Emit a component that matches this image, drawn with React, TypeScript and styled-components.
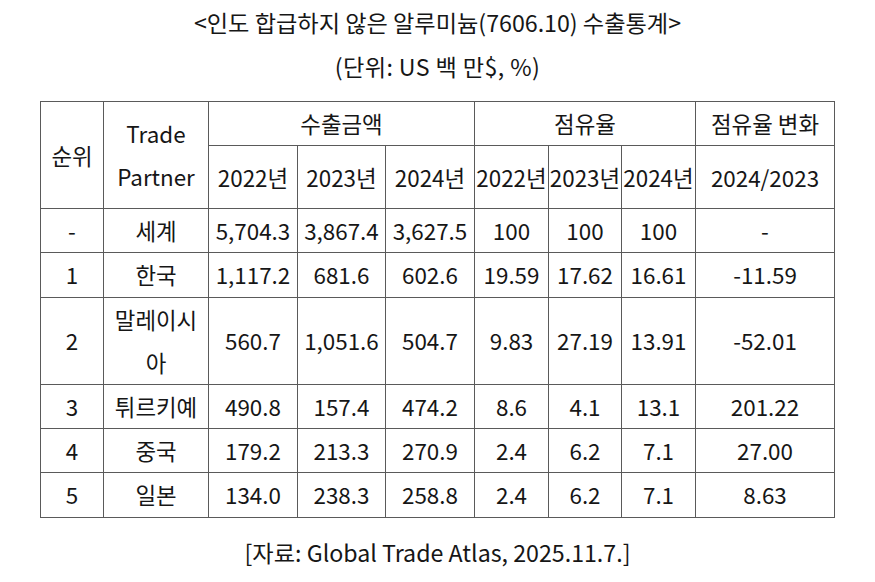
import React from "react";
import styled, { createGlobalStyle } from "styled-components";

const Global = createGlobalStyle`
  html, body { margin: 0; padding: 0; background: #fff; }
  body { font-family: "Noto Sans CJK KR", "Noto Sans", sans-serif; color: #161616; }
`;

const Page = styled.div`
  width: 875px;
  display: flex;
  flex-direction: column;
  align-items: center;
`;

const Title = styled.div`
  font-size: 23.2px;
  line-height: 44px;
  text-align: center;
`;

const Sub = styled(Title)`
  margin-bottom: 13px;
  letter-spacing: 0.4px;
`;

const Source = styled(Title)`
  margin-top: 12px;
`;

const Table = styled.table`
  width: 794px;
  border-collapse: collapse;
  table-layout: fixed;
  font-size: 22.4px;
  line-height: 43.2px;
`;

const Cell = styled.td<{ $h?: number; $pad?: number }>`
  border: 1px solid #5a5a5a;
  padding: 0 ${(p) => p.$pad ?? 0}px;
  text-align: center;
  vertical-align: middle;
  white-space: normal;
  word-break: break-all;
  ${(p) => (p.$h ? `height: ${p.$h}px;` : "")}
`;

const widths = [63, 105, 89, 88, 89, 74, 73, 74, 139];

const rows: string[][] = [
  ["-", "세계", "5,704.3", "3,867.4", "3,627.5", "100", "100", "100", "-"],
  ["1", "한국", "1,117.2", "681.6", "602.6", "19.59", "17.62", "16.61", "-11.59"],
  ["2", "말레이시아", "560.7", "1,051.6", "504.7", "9.83", "27.19", "13.91", "-52.01"],
  ["3", "튀르키예", "490.8", "157.4", "474.2", "8.6", "4.1", "13.1", "201.22"],
  ["4", "중국", "179.2", "213.3", "270.9", "2.4", "6.2", "7.1", "27.00"],
  ["5", "일본", "134.0", "238.3", "258.8", "2.4", "6.2", "7.1", "8.63"],
];

export default function App() {
  return (
    <Page>
      <Global />
      <Title>&lt;인도 합급하지 않은 알루미늄(7606.10) 수출통계&gt;</Title>
      <Sub>(단위: US 백 만$, %)</Sub>
      <Table>
        <colgroup>
          {widths.map((w, i) => (
            <col key={i} style={{ width: w }} />
          ))}
        </colgroup>
        <tbody>
          <tr>
            <Cell rowSpan={2}>순위</Cell>
            <Cell rowSpan={2} $pad={4} style={{ wordBreak: "keep-all" }}>Trade Partner</Cell>
            <Cell colSpan={3} $h={43}>수출금액</Cell>
            <Cell colSpan={3}>점유율</Cell>
            <Cell>점유율 변화</Cell>
          </tr>
          <tr>
            <Cell $h={62}>2022년</Cell>
            <Cell>2023년</Cell>
            <Cell>2024년</Cell>
            <Cell>2022년</Cell>
            <Cell>2023년</Cell>
            <Cell>2024년</Cell>
            <Cell>2024/2023</Cell>
          </tr>
          {rows.map((r, i) => (
            <tr key={i}>
              {r.map((c, j) => (
                <Cell key={j} $pad={j === 1 ? 4 : 0}>{c}</Cell>
              ))}
            </tr>
          ))}
        </tbody>
      </Table>
      <Source>[자료: Global Trade Atlas, 2025.11.7.]</Source>
    </Page>
  );
}
